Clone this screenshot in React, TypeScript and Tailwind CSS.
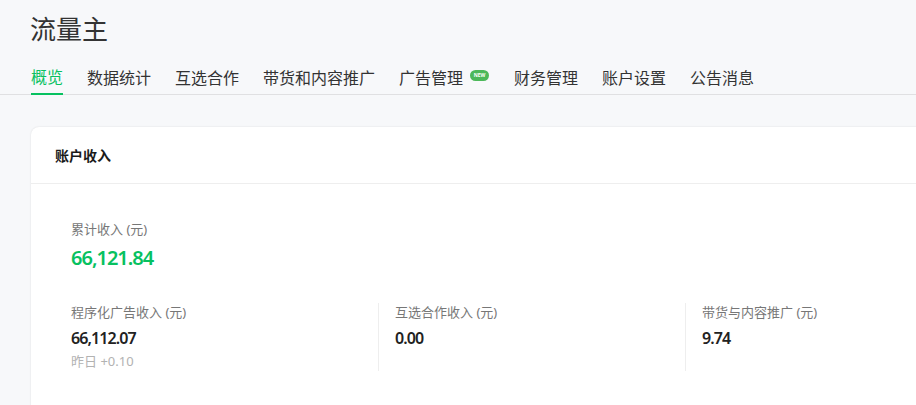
import React from 'react';

const tabs = ['概览', '数据统计', '互选合作', '带货和内容推广', '广告管理', '财务管理', '账户设置', '公告消息'];

const font = "font-['Noto_Sans','Noto_Sans_CJK_SC',sans-serif]";

interface StatProps {
  label: string;
  value: string;
  divider?: boolean;
  children?: React.ReactNode;
}

const Stat: React.FC<StatProps> = ({ label, value, divider, children }) => (
  <div className={`w-[307px] h-[68px] shrink-0 ${divider ? 'border-l border-[#eeeeee] pl-4' : ''}`}>
    <p className="text-[13px] leading-[18px] text-[#777777]">{label}</p>
    <p className="mt-[6px] text-[16px] leading-[22px] font-semibold tracking-[-0.9px] text-[#222222]">{value}</p>
    {children}
  </div>
);

export default function App() {
  return (
    <div className={`w-[916px] h-[405px] overflow-hidden bg-[#f7f8fa] ${font}`}>
      <div className="pl-[30px] pt-[9px] h-[60px]">
        <h1 className="text-[26px] leading-[40px] font-normal text-[#333333]">流量主</h1>
      </div>
      <div className="h-[35px] pl-[31px] flex gap-6 border-b border-[#e0e0e2] w-[916px]">
        {tabs.map((tab, i) => (
          <div
            key={tab}
            className={`relative text-[16px] whitespace-nowrap ${
              i === 0 ? 'h-[35px] leading-[34px] text-[#07c160] border-b-2 border-[#07c160]' : 'h-[34px] leading-[36px] text-[#333333]'
            } ${tab === '广告管理' ? 'pr-[27px]' : ''}`}
          >
            {tab}
            {tab === '广告管理' && (
              <span className="absolute left-[71px] top-[10px] w-[19px] h-[11px] rounded-full bg-[#4cb85a] text-white text-[5px] leading-[11px] text-center font-bold">
                NEW
              </span>
            )}
          </div>
        ))}
      </div>
      <div className="ml-[31px] mt-[32px] w-[1000px] h-[290px] bg-white rounded-lg shadow-[0_0_2px_rgba(0,0,0,0.12)]">
        <div className="h-[57px] pl-6 pt-px border-b border-[#eeeeee] flex items-center">
          <h2 className="text-[14px] font-semibold text-[#1a1a1a]">账户收入</h2>
        </div>
        <div className="pl-10 pt-[36px]">
          <p className="text-[13px] leading-[18px] text-[#777777]">累计收入 (元)</p>
          <p className="mt-[6px] text-[20px] leading-[28px] font-semibold tracking-[-1px] text-[#07c160]">66,121.84</p>
          <div className="flex mt-[31px]">
            <Stat label="程序化广告收入 (元)" value="66,112.07">
              <p className="mt-[3px] text-[13px] leading-[18px] text-[#b2b2b2]">昨日 +0.10</p>
            </Stat>
            <Stat label="互选合作收入 (元)" value="0.00" divider />
            <Stat label="带货与内容推广 (元)" value="9.74" divider />
          </div>
        </div>
      </div>
    </div>
  );
}
